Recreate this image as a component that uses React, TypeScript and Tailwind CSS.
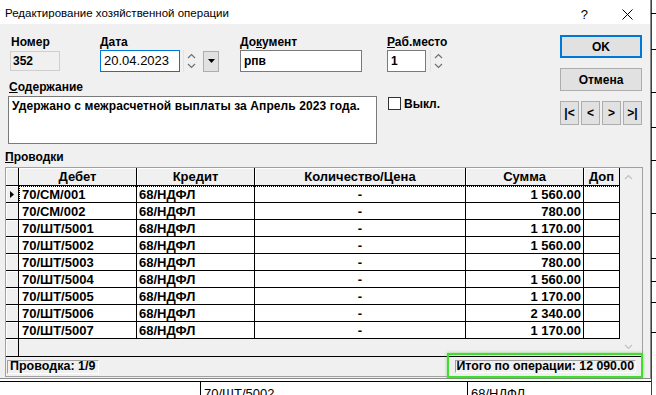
import React from "react";

const rows: [string, string][] = [
  ["70/СМ/001", "1 560.00"],
  ["70/СМ/002", "780.00"],
  ["70/ШТ/5001", "1 170.00"],
  ["70/ШТ/5002", "1 560.00"],
  ["70/ШТ/5003", "780.00"],
  ["70/ШТ/5004", "1 560.00"],
  ["70/ШТ/5005", "1 170.00"],
  ["70/ШТ/5006", "2 340.00"],
  ["70/ШТ/5007", "1 170.00"],
];

function ChevUp() {
  return (
    <svg width="9" height="6" viewBox="0 0 9 6">
      <path d="M1 5 L4.5 1.5 L8 5" fill="none" stroke="#707070" strokeWidth="1.2" />
    </svg>
  );
}
function ChevDown() {
  return (
    <svg width="9" height="6" viewBox="0 0 9 6">
      <path d="M1 1 L4.5 4.5 L8 1" fill="none" stroke="#707070" strokeWidth="1.2" />
    </svg>
  );
}

function Spinner() {
  return (
    <div className="flex h-[22px] items-stretch">
      <div className="w-px bg-[#e3e3e3]" />
      <div className="flex w-[14px] flex-col items-center justify-center gap-[4px]">
        <ChevUp />
        <ChevDown />
      </div>
    </div>
  );
}

function Label({ children }: { children: React.ReactNode }) {
  return <div className="h-[14px] text-[12px] font-bold leading-[14px] text-black">{children}</div>;
}

const headCell = "flex items-center justify-center border-r border-b border-black bg-[#f0f0f0] shadow-[inset_1px_1px_0_#ffffff] text-[13px] font-bold leading-none";
const indCell = "flex w-[13px] shrink-0 items-center justify-center border-r border-b border-black bg-[#f0f0f0] shadow-[inset_1px_1px_0_#ffffff]";
const dataCell = "flex items-center border-r border-b border-black bg-white text-[13px] font-bold leading-none";

export default function App() {
  return (
    <div className="relative h-[395px] w-[656px] overflow-hidden bg-white font-['Liberation_Sans',Arial,sans-serif] text-black">
      {/* background window behind the dialog */}
      <div className="absolute left-[651px] top-0 h-[395px] w-px bg-[#404040]" />
      <div className="absolute left-[651px] top-[13px] h-px w-[6px] bg-black" />
      <div className="absolute left-[651px] top-[49px] h-px w-[6px] bg-black" />
      <div className="absolute left-[651px] top-[92px] h-px w-[6px] bg-black" />
      <div className="absolute left-[651px] top-[127px] h-px w-[6px] bg-black" />
      <div className="absolute left-[651px] top-[160px] h-px w-[6px] bg-black" />
      <div className="absolute left-[651px] top-[213px] h-px w-[6px] bg-black" />
      <div className="absolute left-[651px] top-[258px] h-px w-[6px] bg-black" />
      <div className="absolute left-[651px] top-[281px] h-px w-[6px] bg-black" />
      <div className="absolute left-[651px] top-[302px] h-px w-[6px] bg-black" />
      <div className="absolute left-[651px] top-[332px] h-px w-[6px] bg-black" />
      <div className="absolute left-0 top-[381px] h-px w-[651px] bg-black" />
      <div className="absolute left-[200px] top-[381px] h-[14px] w-px bg-black" />
      <div className="absolute left-[467px] top-[381px] h-[14px] w-px bg-black" />
      <div className="absolute left-[204px] top-[386px] text-[13px] leading-[15px]">70/ШТ/5002</div>
      <div className="absolute left-[471px] top-[386px] text-[13px] leading-[15px]">68/НДФЛ</div>

      {/* dialog window */}
      <div className="absolute left-0 top-0 flex h-[379px] w-[651px] flex-col border-r border-b border-[#8a8a8a] bg-[#f0f0f0]">
        {/* title bar */}
        <div className="flex h-[24px] shrink-0 items-center bg-white">
          <div className="ml-[5px] mt-[4px] flex-1 text-[11.5px] leading-none">Редактирование хозяйственной операции</div>
          <div className="mr-[34px] mt-[4px] text-[13px] leading-none">?</div>
          <svg width="11" height="11" viewBox="0 0 11 11" className="mr-[17px] mt-[4px]">
            <path d="M0.5 0.5 L10.5 10.5 M10.5 0.5 L0.5 10.5" stroke="#000" strokeWidth="1" />
          </svg>
        </div>

        {/* top section */}
        <div className="flex shrink-0">
          <div className="flex w-[560px] flex-col">
            {/* row 1 */}
            <div className="mt-[11px] flex items-start">
              <div className="ml-[10px] flex w-[50px] flex-col">
                <div className="pl-[1px]"><Label>Номер</Label></div>
                <div className="mt-[2px] flex h-[20px] items-center border border-[#cfcfcf] bg-[#f0f0f0] pl-[2px] text-[12px] font-bold">352</div>
              </div>
              <div className="ml-[40px] flex flex-col">
                <Label><span className="underline">Д</span>ата</Label>
                <div className="mt-[1px] flex items-center">
                  <div className="flex h-[22px] w-[80px] items-center border border-[#0078d7] bg-white pl-[3px] text-[13px]">20.04.2023</div>
                  <div className="ml-[3px]"><Spinner /></div>
                  <div className="ml-[5px] flex h-[21px] w-[16px] items-center justify-center border border-[#adadad] bg-[#e1e1e1]">
                    <svg width="7" height="4" viewBox="0 0 7 4"><path d="M0 0 H7 L3.5 4 Z" fill="#000" /></svg>
                  </div>
                </div>
              </div>
              <div className="ml-[21px] flex flex-col">
                <Label>До<span className="underline">к</span>умент</Label>
                <div className="mt-[1px] flex h-[22px] w-[122px] items-center border border-[#7a7a7a] bg-white pl-[3px] text-[12px] font-bold">рпв</div>
              </div>
              <div className="ml-[25px] flex flex-col">
                <Label><span className="underline">Р</span>аб.место</Label>
                <div className="mt-[1px] flex items-center">
                  <div className="flex h-[22px] w-[39px] items-center border border-[#7a7a7a] bg-white pl-[3px] text-[12px] font-bold">1</div>
                  <div className="ml-[4px]"><Spinner /></div>
                </div>
              </div>
            </div>
            {/* row 2 */}
            <div className="mt-[8px] flex items-start">
              <div className="ml-[9px] flex flex-col">
                <Label><span className="underline">С</span>одержание</Label>
                <div className="ml-[-1px] mt-[2px] h-[48px] w-[369px] border border-[#7a7a7a] bg-white px-[3px] pt-[2px] text-[12px] font-bold leading-[14px] tracking-[0.1px]">
                  Удержано с межрасчетной выплаты за Апрель 2023 года.
                </div>
              </div>
              <div className="ml-[11px] mt-[17px] flex items-center">
                <div className="h-[13px] w-[13px] border border-[#333333] bg-white" />
                <div className="ml-[3px] text-[12px] font-bold leading-none">Выкл.</div>
              </div>
            </div>
          </div>
          {/* right buttons */}
          <div className="flex w-[82px] flex-col">
            <div className="mt-[11px] flex h-[23px] items-center justify-center border-2 border-[#0078d7] bg-[#e1e1e1] text-[12px] font-bold">OK</div>
            <div className="mt-[10px] flex h-[23px] items-center justify-center border border-[#adadad] bg-[#e1e1e1] text-[12px] font-bold">Отмена</div>
            <div className="mt-[10px] flex gap-[2px]">
              {["|<", "<", ">", ">|"].map((t) => (
                <div key={t} className="flex h-[24px] w-[19px] items-center justify-center border border-[#adadad] bg-[#e1e1e1] text-[12px] font-bold">{t}</div>
              ))}
            </div>
          </div>
        </div>

        {/* Проводки */}
        <div className="ml-[5px] mt-[6px] h-[14px] text-[12px] font-bold leading-[14px]"><span className="underline">П</span>роводки</div>

        {/* grid */}
        <div className="ml-[5px] mt-[3px] flex h-[210px] w-[638px] flex-col border border-[#a0a0a0] bg-[#f0f0f0]">
          <div className="flex h-[189px] shrink-0 border-b border-black">
            <div className="flex w-[614px] flex-col">
              <div className="flex h-[18px]">
                <div className={indCell} />
                <div className={`${headCell} w-[118px]`}>Дебет</div>
                <div className={`${headCell} w-[118px]`}>Кредит</div>
                <div className={`${headCell} w-[211px]`}>Количество/Цена</div>
                <div className={`${headCell} w-[118px]`}>Сумма</div>
                <div className={`${headCell} w-[36px]`}>Доп</div>
              </div>
              {rows.map(([d, s], i) => (
                <div key={d} className="flex h-[17px]">
                  <div className={indCell}>
                    {i === 0 && (
                      <svg width="4" height="7" viewBox="0 0 4 7"><path d="M0 0 L4 3.5 L0 7 Z" fill="#000" /></svg>
                    )}
                  </div>
                  <div className={`flex ${i === 0 ? "outline-1 outline-dotted outline-black -outline-offset-1" : ""}`}>
                    <div className={`${dataCell} w-[118px] pl-[3px]`}>{d}</div>
                    <div className={`${dataCell} w-[118px] pl-[2px]`}>68/НДФЛ</div>
                    <div className={`${dataCell} w-[211px] justify-center`}>-</div>
                    <div className={`${dataCell} w-[118px] justify-end pr-[2px]`}>{s}</div>
                    <div className={`${dataCell} w-[36px]`} />
                  </div>
                </div>
              ))}
              <div className="flex flex-1">
                <div className="w-[13px] border-r border-black bg-[#f0f0f0] shadow-[inset_1px_1px_0_#ffffff]" />
              </div>
            </div>
            <div className="flex w-[17px] flex-col items-center justify-between py-[6px]">
              <svg width="9" height="6" viewBox="0 0 9 6"><path d="M1 5 L4.5 1.5 L8 5" fill="none" stroke="#c0c0c0" strokeWidth="1.2" /></svg>
              <svg width="9" height="6" viewBox="0 0 9 6"><path d="M1 1 L4.5 4.5 L8 1" fill="none" stroke="#c0c0c0" strokeWidth="1.2" /></svg>
            </div>
          </div>
          <div className="flex flex-1 items-center justify-between">
            <div className="ml-[1px] flex h-[14px] items-center border-t border-l border-[#a0a0a0] border-r border-b border-r-white border-b-white pl-[2px] pr-[3px] text-[12.5px] font-bold leading-none">Проводка: 1/9</div>
            <div className="relative mr-[6px]">
              <div className="flex h-[13px] items-center border-t border-l border-[#a0a0a0] border-r border-b border-r-white border-b-white pl-[1px] pr-[1px] text-[12.3px] font-bold leading-none">Итого по операции: 12 090.00</div>
              <div className="absolute -bottom-[5px] -left-[8px] -right-[7px] -top-[7px] border-2 border-[#3fe02b] shadow-[0_0_3px_rgba(60,200,40,0.6)]" />
            </div>
          </div>
        </div>
      </div>
    </div>
  );
}
